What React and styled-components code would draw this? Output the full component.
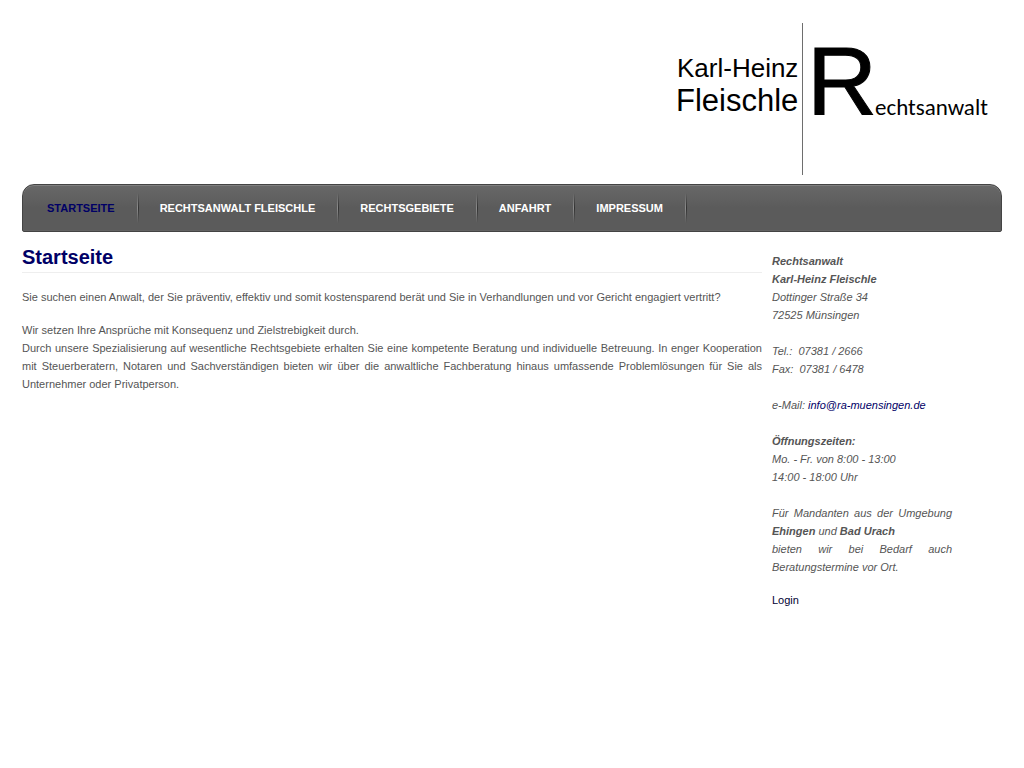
import React from 'react';
import styled, { createGlobalStyle } from 'styled-components';

const GlobalStyle = createGlobalStyle`
  body {
    margin: 0;
    background-color: #ffffff;
    color: #555555;
    font-family: "Liberation Sans", Arial, Helvetica, sans-serif;
    font-size: 11px;
    line-height: 18px;
  }

  a {
    color: #000066;
    text-decoration: none;
  }

  a:hover {
    text-decoration: underline;
  }
`;

const Page = styled.div`
  max-width: 980px;
  margin: 0 auto;
  padding: 0 22px;
`;

const Header = styled.header`
  display: flex;
  justify-content: flex-end;
  padding: 22px 10px 8px;
`;

const Logo = styled.svg`
  display: block;
  width: 320px;
  height: 154px;
  font-family: "Liberation Sans", Arial, sans-serif;
  fill: #000000;
`;

const Nav = styled.nav`
  box-sizing: border-box;
  height: 48px;
  padding: 0 2px;
  border: 1px solid #444444;
  border-radius: 12px 12px 2px 2px;
  background: linear-gradient(#686868, #5b5b5b 50%, #5b5b5b);
  box-shadow: inset 0 1px 0 #808080, inset 0 -1px 0 #626262;
`;

const NavList = styled.ul`
  display: flex;
  align-items: center;
  height: 100%;
  margin: 0;
  padding: 0;
  list-style: none;
`;

const NavItem = styled.li`
  padding: 6px 24px 6px 22px;
  margin-right: -1px;
  background:
    linear-gradient(rgba(140, 140, 140, 0), #8c8c8c 50%, rgba(140, 140, 140, 0)) right 1px center / 1px 30px no-repeat,
    linear-gradient(rgba(50, 50, 50, 0), #323232 50%, rgba(50, 50, 50, 0)) right center / 1px 30px no-repeat;
`;

const NavLink = styled.a`
  color: ${({ $active }) => ($active ? '#000066' : '#ffffff')};
  font-weight: bold;
  line-height: 18px;
  text-transform: uppercase;
  white-space: nowrap;
`;

const Columns = styled.div`
  display: flex;
  gap: 10px;
  padding-right: 50px;
`;

const Content = styled.main`
  flex: 1;
  min-width: 0;
  padding-top: 12px;
  text-align: justify;
`;

const Title = styled.h1`
  margin: 0 0 15px;
  padding-bottom: 1px;
  border-bottom: 1px solid #eeeeee;
  color: #000066;
  font-size: 20px;
  line-height: 27px;
`;

const Paragraph = styled.p`
  margin: 0 0 15px;
`;

const Sidebar = styled.aside`
  flex: 0 0 180px;
  padding-top: 20px;
`;

const Contact = styled.address`
  margin-bottom: 15px;
  font-style: italic;
  text-align: justify;
`;

const LoginLink = styled.a`
  color: #000033;
`;

const links = [
  { label: 'Startseite', href: '#startseite' },
  { label: 'Rechtsanwalt Fleischle', href: '#rechtsanwalt' },
  { label: 'Rechtsgebiete', href: '#rechtsgebiete' },
  { label: 'Anfahrt', href: '#anfahrt' },
  { label: 'Impressum', href: '#impressum' },
];

const App = () => {
  const current = 'Startseite';

  return (
    <>
      <GlobalStyle />
      <Page>
        <Header>
          <Logo viewBox="0 0 320 154" role="img" aria-label="Karl-Heinz Fleischle Rechtsanwalt">
            <text x="5" y="55" fontSize="26">Karl-Heinz</text>
            <text x="4" y="89" fontSize="31">Fleischle</text>
            <rect x="130" y="1" width="1" height="152" fill="#6e6e6e" />
            <text x="135" y="93" fontSize="97" stroke="#000000" strokeWidth="1">R</text>
            <text x="203" y="93" fontSize="23" fontFamily="Carlito, Calibri, Lato, sans-serif">echtsanwalt</text>
          </Logo>
        </Header>

        <Nav>
          <NavList>
            {links.map((link) => (
              <NavItem key={link.label}>
                <NavLink href={link.href} $active={link.label === current}>{link.label}</NavLink>
              </NavItem>
            ))}
          </NavList>
        </Nav>

        <Columns>
          <Content>
            <Title>Startseite</Title>
            <Paragraph>
              Sie suchen einen Anwalt, der Sie präventiv, effektiv und somit kostensparend berät und Sie in
              Verhandlungen und vor Gericht engagiert vertritt?
            </Paragraph>
            <Paragraph>
              Wir setzen Ihre Ansprüche mit Konsequenz und Zielstrebigkeit durch.
              <br />
              Durch unsere Spezialisierung auf wesentliche Rechtsgebiete erhalten Sie eine kompetente Beratung
              und individuelle Betreuung. In enger Kooperation mit Steuerberatern, Notaren und Sachverständigen
              bieten wir über die anwaltliche Fachberatung hinaus umfassende Problemlösungen für Sie als
              Unternehmer oder Privatperson.
            </Paragraph>
          </Content>

          <Sidebar>
            <Contact>
              <strong>Rechtsanwalt</strong><br />
              <strong>Karl-Heinz Fleischle</strong><br />
              Dottinger Straße 34<br />
              72525 Münsingen<br />
              <br />
              Tel.:&nbsp; 07381 / 2666<br />
              Fax:&nbsp; 07381 / 6478<br />
              <br />
              e-Mail: <a href="mailto:info@ra-muensingen.de">info@ra-muensingen.de</a><br />
              <br />
              <strong>Öffnungszeiten:</strong><br />
              Mo. - Fr. von 8:00 - 13:00<br />
              14:00 - 18:00 Uhr<br />
              <br />
              Für Mandanten aus der Umgebung <strong>Ehingen</strong> und <strong>Bad Urach</strong><br />
              bieten wir bei Bedarf auch Beratungstermine vor Ort.
            </Contact>
            <LoginLink href="#login">Login</LoginLink>
          </Sidebar>
        </Columns>
      </Page>
    </>
  );
};

export default App;
